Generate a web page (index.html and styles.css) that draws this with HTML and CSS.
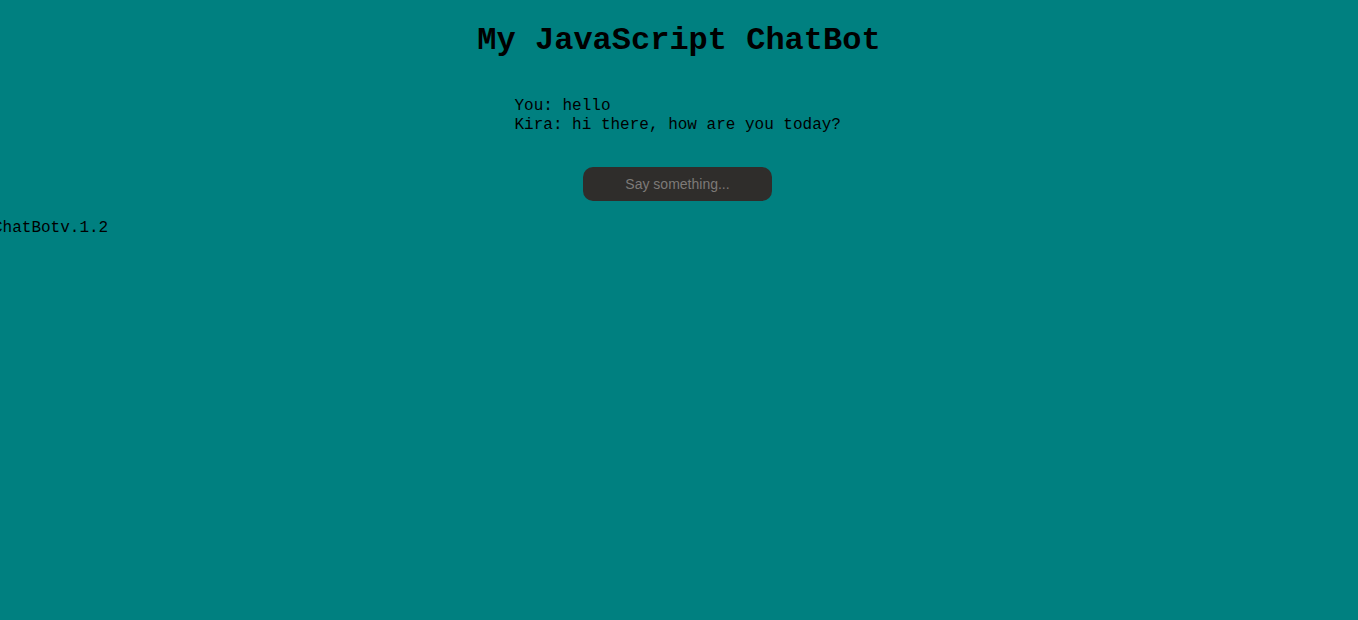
FILE: index.html
```html
<!DOCTYPE html>
<html>
<head>
<meta charset="utf-8">
<title>My JavaScript ChatBot</title>
<link rel="stylesheet" href="styles.css">
</head>
<body>
<h1 class="title">My JavaScript ChatBot</h1>
<div class="chat">
  <div class="line">You: hello</div>
  <div class="line">Kira: hi there, how are you today?</div>
</div>
<div class="input-row">
  <input class="say" type="text" placeholder="Say something...">
</div>
<div class="version">ChatBotv.1.2</div>
</body>
</html>
```

FILE: styles.css
```css
html, body {
  background: #008080;
}
body {
  margin: 0;
  font-family: "Courier New", "Liberation Mono", monospace;
  color: #000;
}
.title {
  margin: 0;
  padding-top: 21px;
  text-align: center;
  font-size: 32px;
  font-weight: bold;
  line-height: 40px;
}
.chat {
  width: 330px;
  margin: 36px auto 0;
  padding-left: 1px;
  font-size: 16px;
  line-height: 19px;
}
.input-row {
  display: flex;
  justify-content: center;
  margin-top: 32px;
  padding-right: 3px;
}
.say {
  width: 189px;
  height: 34px;
  box-sizing: border-box;
  border: none;
  border-radius: 10px;
  background: #2f2d2b;
  color: #ccc;
  text-align: center;
  font-family: "Liberation Sans", Arial, sans-serif;
  font-size: 14px;
  outline: none;
}
.say::placeholder {
  color: #7d7a78;
}
.version {
  margin-top: 18px;
  margin-left: -7px;
  font-size: 16px;
  line-height: 19px;
}
```
